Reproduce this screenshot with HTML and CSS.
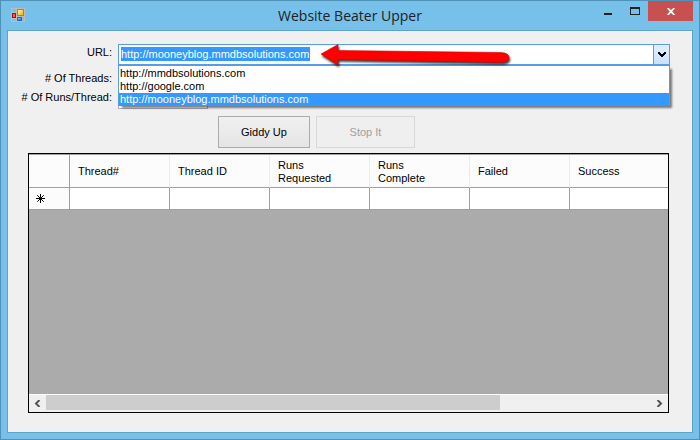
FILE: index.html
```html
<!DOCTYPE html>
<html lang="en">
<head>
<meta charset="utf-8">
<title>Website Beater Upper</title>
<link rel="stylesheet" href="styles.css">
</head>
<body>
<div class="window">
  <header class="titlebar">
    <svg class="app-icon" width="14" height="14" viewBox="0 0 14 14" shape-rendering="crispEdges" aria-hidden="true">
      <defs>
        <linearGradient id="gold" x1="0" y1="0" x2="1" y2="1"><stop offset="0" stop-color="#fff3a8"/><stop offset="1" stop-color="#f2b400"/></linearGradient>
        <linearGradient id="blue" x1="0" y1="0" x2="1" y2="1"><stop offset="0" stop-color="#9cc4ff"/><stop offset="1" stop-color="#2f62d0"/></linearGradient>
      </defs>
      <path d="M0 0h14v14H0zM1 1v3h4V1zM1 5v5h4V5zM1 11v2h4v-2zM6 1v7h7V1zM6 9v4h7V9z" fill="#c0bcbc" fill-rule="evenodd"/>
      <rect x="1" y="5" width="4" height="5" fill="#a80f0f"/>
      <rect x="2" y="6" width="2" height="3" fill="#e8604a"/>
      <rect x="6" y="1" width="7" height="7" fill="#b98208"/>
      <rect x="7" y="2" width="5" height="5" fill="url(#gold)"/>
      <rect x="6" y="9" width="5" height="4" fill="#2f62c8"/>
      <rect x="7" y="10" width="3" height="2" fill="url(#blue)"/>
    </svg>
    <h1 class="title">Website Beater Upper</h1>
    <div class="caption">
      <button class="cap" type="button" aria-label="Minimize"><svg width="8" height="8" viewBox="0 0 8 8"><path d="M0 6h8v2H0z" fill="#222"/></svg></button>
      <button class="cap" type="button" aria-label="Maximize"><svg width="10" height="8" viewBox="0 0 10 8"><path d="M0 0h10v8H0zM1 2v5h8V2z" fill="#222" fill-rule="evenodd"/></svg></button>
      <button class="cap close" type="button" aria-label="Close"><svg width="8" height="7" viewBox="0 0 8 7"><path d="M.7 0l6.600 7M7.300 0L.7 7" stroke="#fff" stroke-width="1.800"/></svg></button>
    </div>
  </header>
  <main class="client">
    <form class="fields">
      <label class="top" for="url">URL:</label>
      <div class="combo">
        <div class="combo-text"><input id="url" type="text" value="http://mooneyblog.mmdbsolutions.com" spellcheck="false" autocomplete="off"></div>
        <button class="drop" type="button" aria-label="Show addresses"><svg width="8" height="6" viewBox="0 0 8 6"><path d="M0 0h2v1h1v1h2V1h1V0h2v2H7v1H6v1H5v1H3V4H2V3H1V2H0z" fill="#000" shape-rendering="crispEdges"/></svg></button>
        <ul class="options" role="listbox">
          <li role="option">http://mmdbsolutions.com</li>
          <li role="option">http://google.com</li>
          <li class="picked" role="option" aria-selected="true">http://mooneyblog.mmdbsolutions.com</li>
        </ul>
        <svg class="arrow" width="196" height="28" viewBox="0 0 196 28" aria-hidden="true">
          <path d="M2 11L19 1.500V7.500L182 9.500Q190 10 190 14.500Q190 19.500 182 19.500L19 16.500V22Z" fill="#fe0000" stroke="#d40000" stroke-width=".6"/>
        </svg>
      </div>
      <label for="threads"># Of Threads:</label>
      <input class="num" id="threads" type="text">
      <label for="runs"># Of Runs/Thread:</label>
      <input class="num" id="runs" type="text">
    </form>
    <div class="actions">
      <button class="btn go" type="button">Giddy Up</button>
      <button class="btn stop" type="button" disabled>Stop It</button>
    </div>
    <section class="grid">
      <div class="sheet">
        <table>
          <colgroup><col class="c-head"><col span="6" class="c-data"></colgroup>
          <thead>
            <tr><th></th><th>Thread#</th><th>Thread ID</th><th>Runs<br>Requested</th><th>Runs<br>Complete</th><th>Failed</th><th>Success</th></tr>
          </thead>
          <tbody>
            <tr>
              <th><svg width="9" height="9" viewBox="0 0 9 9" aria-label="New row"><path d="M4.500 0v9M0 4.500h9M1.300 1.300l6.400 6.400M7.700 1.300L1.300 7.700" stroke="#000"/></svg></th>
              <td></td><td></td><td></td><td></td><td></td><td></td>
            </tr>
          </tbody>
        </table>
      </div>
      <div class="scroll">
        <button type="button" aria-label="Scroll left"><svg width="7" height="7" viewBox="0 0 7 7"><path d="M5.500 0L2 3.500L5.500 7" fill="none" stroke="#555" stroke-width="2"/></svg></button>
        <div class="track"><div class="thumb"></div></div>
        <button type="button" aria-label="Scroll right"><svg width="7" height="7" viewBox="0 0 7 7"><path d="M1.500 0L5 3.500L1.500 7" fill="none" stroke="#555" stroke-width="2"/></svg></button>
      </div>
    </section>
  </main>
</div>
<script src="app.js"></script>
</body>
</html>
```
FILE: styles.css
```css
* { box-sizing: border-box; }

body {
  margin: 0;
  font: 11px/13px "Liberation Sans", Arial, sans-serif;
  color: #000;
}

button, input { font: inherit; color: inherit; }
button { padding: 0; border: 0; background: none; }
svg { display: block; }

.window {
  display: flex;
  flex-direction: column;
  min-height: 100vh;
  padding: 0 6px 6px;
  border: 1px solid #4e92b8;
  background: #77c0ea;
}

/* Title bar */
.titlebar {
  display: grid;
  grid-template-columns: 1fr auto 1fr;
  align-items: start;
  height: 29px;
}
.app-icon { margin: 7px 0 0 4px; }
.title {
  margin: 0;
  font: 14px/29px "Open Sans", "Noto Sans", sans-serif;
  color: #1c2226;
}
.caption { display: flex; justify-content: flex-end; }
.cap {
  display: flex;
  align-items: center;
  justify-content: center;
  width: 27px;
  height: 20px;
}
.close { width: 45px; background: #c75050; }

/* Client area */
.client {
  flex: 1;
  display: flex;
  flex-direction: column;
  padding: 13px 22px 19px 20px;
  border: 1px solid #5fa3c6;
  background: #f0f0f0;
}

.fields {
  display: grid;
  grid-template-columns: 84px 1fr;
  grid-template-rows: 21px 23px 21px;
  column-gap: 6px;
  align-items: end;
}
.fields label {
  padding-bottom: 4px;
  justify-self: end;
  white-space: nowrap;
}
.fields .top { align-self: start; padding: 2px 0 0; }
.fields label:not(.top) { padding-bottom: 3px; }
.fields label:last-of-type { padding-bottom: 5px; }

.combo {
  position: relative;
  display: flex;
  height: 21px;
  border: 1px solid #569de5;
  background: #fff;
}
.combo-text { flex: 1; padding: 2px; }
#url {
  display: block;
  field-sizing: content;
  height: 14px;
  padding: 0;
  border: 0;
  border-right: 1px solid #d87418;
  outline: 0;
  line-height: 14px;
}
#url::selection { background: #3399ff; color: #fff; }
.drop {
  display: flex;
  align-items: center;
  justify-content: center;
  width: 16px;
  border-left: 1px solid #569de5;
  background: linear-gradient(#e3effc, #c9e1fb);
}
.options {
  position: absolute;
  z-index: 1;
  top: 20px;
  left: -1px;
  right: -1px;
  margin: 0;
  padding: 1px 0 0;
  border: 1px solid #569de5;
  border-bottom: 0;
  background: #fff;
  box-shadow: 3px 3px 2px -1px rgba(0, 0, 0, .5);
  list-style: none;
}
.options li { padding: 0 1px; }
.options .picked { background: #3399ff; color: #fff; }
.arrow {
  position: absolute;
  z-index: 2;
  top: -2px;
  left: 200px;
  filter: drop-shadow(1px 2px 1px rgba(0, 0, 0, .75));
}
.num {
  width: 90px;
  height: 20px;
  border: 1px solid #abadb3;
  background: #fff;
}

.actions {
  display: flex;
  gap: 6px;
  padding: 7px 0 5px 190px;
}
.btn {
  height: 32px;
  border: 1px solid #acacac;
  background: linear-gradient(#f0f0f0, #e5e5e5);
}
.go { width: 92px; }
.stop { width: 99px; border-color: #d9d9d9; background: #efefef; color: #a0a0a0; }

/* Data grid */
.grid {
  flex: 1;
  display: flex;
  flex-direction: column;
  margin-right: 1px;
  border: 1px solid #000;
  background: #ababab;
}
.sheet { flex: 1; overflow: hidden; border-top: 1px solid #a0a0a0; }
table {
  width: 641px;
  table-layout: fixed;
  border-collapse: separate;
  border-spacing: 0;
}
.c-head { width: 41px; }
.c-data { width: 100px; }
th, td { border: 0 solid #a0a0a0; border-width: 0 1px 1px 0; padding: 0; }
th { padding: 0 7px; background: #fcfcfc; font-weight: normal; text-align: left; }
thead th { height: 33px; padding: 1px 8px 0; border-right-color: #e3eef8; }
thead th:first-child { border-right-color: #a0a0a0; }
td, tbody th { height: 22px; background: #fff; }
tbody th { background: #fcfcfc; }

.scroll {
  display: flex;
  height: 18px;
  border-top: 1px solid #fff;
  background: #f0f0f0;
}
.scroll button {
  display: flex;
  align-items: center;
  justify-content: center;
  width: 17px;
}
.track { flex: 1; }
.thumb { width: 75%; height: 15px; background: #cdcdcd; }
```
FILE: app.js
```js
const url = document.getElementById("url");
url.focus();
url.select();
```
